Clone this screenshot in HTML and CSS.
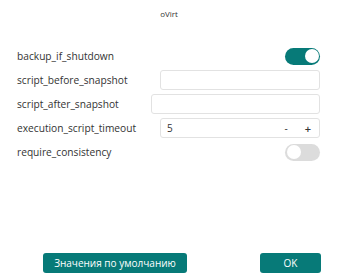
FILE: index.html
```html
<!DOCTYPE html>
<html lang="ru">
  <head>
    <meta charset="UTF-8" />
    <meta name="viewport" content="width=device-width,initial-scale=1.0" />
    <title>oVirt</title>
    <link rel="stylesheet" href="styles.css">
  </head>
  <body>
    <div class="dialog">
      <div class="dialog-title">oVirt</div>
      <form class="settings-form" autocomplete="off">
        <div class="row">
          <label>backup_if_shutdown</label>
          <span class="switch on"><span class="knob"></span></span>
        </div>
        <div class="row">
          <label for="before">script_before_snapshot</label>
          <input type="text" id="before" class="field field-a" />
        </div>
        <div class="row">
          <label for="after">script_after_snapshot</label>
          <input type="text" id="after" class="field field-b" />
        </div>
        <div class="row">
          <label for="timeout">execution_script_timeout</label>
          <div class="field field-a number">
            <span class="num-value">5</span>
            <span class="num-btn">-</span>
            <span class="num-btn plus">+</span>
          </div>
        </div>
        <div class="row">
          <label>require_consistency</label>
          <span class="switch"><span class="knob"></span></span>
        </div>
      </form>
      <div class="dialog-footer">
        <button type="button" class="btn btn-defaults">Значения по умолчанию</button>
        <button type="button" class="btn btn-ok">OK</button>
      </div>
    </div>
  </body>
</html>
```

FILE: styles.css
```css
html,
body {
  margin: 0;
  height: 100%;
  background: #fff;
}
body {
  font-family: "Open Sans", sans-serif;
  color: #333;
}
.dialog {
  height: 100%;
  display: flex;
  flex-direction: column;
  box-sizing: border-box;
  padding-bottom: 6px;
}
.dialog-title {
  text-align: center;
  font-size: 8px;
  line-height: 12px;
  color: #333;
  padding-top: 8px;
  height: 44px;
  box-sizing: border-box;
}
.settings-form {
  display: flex;
  flex-direction: column;
  padding: 0 18px 0 17px;
}
.row {
  display: flex;
  align-items: center;
  justify-content: space-between;
  height: 24px;
}
.row label {
  font-size: 10.2px;
  color: #333;
}
.field {
  box-sizing: border-box;
  height: 20px;
  border: 1px solid #e2e2e2;
  border-radius: 3px;
  background: #fff;
  font-family: "Open Sans", sans-serif;
  font-size: 10px;
}
.field-a {
  width: 160px;
}
.field-b {
  width: 169px;
}
.number {
  display: flex;
  align-items: center;
  padding: 0 0 0 6px;
}
.num-value {
  flex: 1;
}
.num-btn {
  width: 22px;
  text-align: center;
  color: #333;
}
.num-btn.plus {
  font-weight: 600;
  font-size: 11px;
}
.switch {
  position: relative;
  width: 35px;
  height: 17px;
  border-radius: 9px;
  background: #dcdcdc;
}
.switch .knob {
  position: absolute;
  top: 1.5px;
  left: 1.5px;
  width: 14px;
  height: 14px;
  border-radius: 50%;
  background: #fff;
}
.switch.on {
  background: #077a78;
}
.switch.on .knob {
  left: auto;
  right: 1.5px;
}
.dialog-footer {
  margin-top: auto;
  display: flex;
  justify-content: space-between;
  padding: 0 17px 0 43px;
}
.btn {
  height: 20px;
  border: none;
  border-radius: 3px;
  background: #077a78;
  color: #fff;
  font-family: "Open Sans", sans-serif;
  font-size: 10px;
  padding: 0;
}
.btn-defaults {
  width: 144px;
}
.btn-ok {
  width: 61px;
}
```
